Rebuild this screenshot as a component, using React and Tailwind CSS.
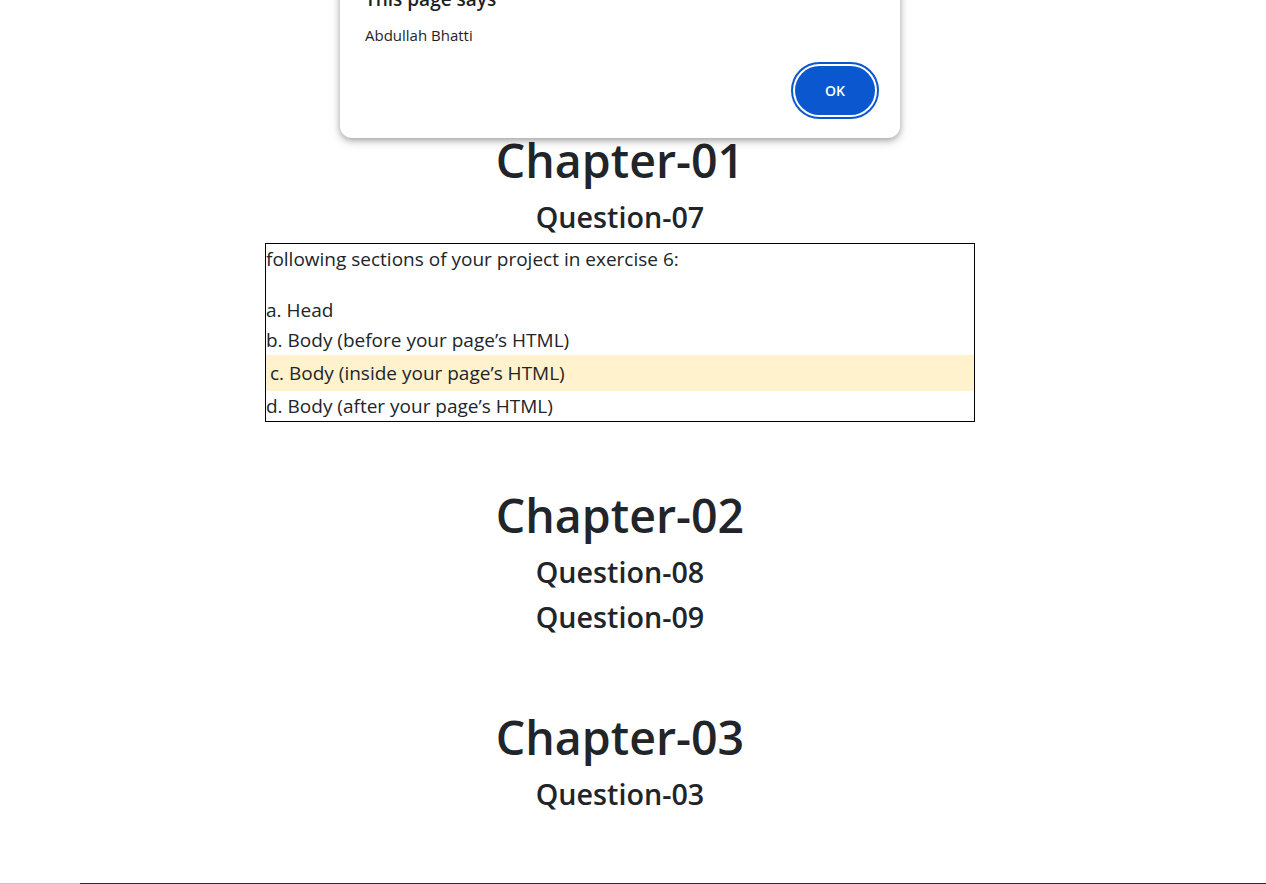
import React from "react";

const headFont = { fontFamily: '"Segoe UI", "Open Sans", "Noto Sans", sans-serif' };

function AlertDialog() {
  return (
    <div className="absolute left-[340px] top-[-34px] w-[560px] rounded-xl bg-white pl-[25px] pr-[21px] pt-[20px] pb-[19px] shadow-[0_2px_6px_rgba(0,0,0,0.3),0_4px_12px_rgba(0,0,0,0.12)]">
      <div className="text-[19px] font-semibold leading-[26px] text-[#1f1f1f]">This page says</div>
      <div className="mt-[13px] text-[15px] leading-[20px] text-[#1f1f1f]">Abdullah Bhatti</div>
      <div className="mt-[17px] flex justify-end">
        <button className="flex h-[57px] w-[88px] items-center justify-center rounded-full border-2 border-[#0b57d0] p-[2px]">
          <span className="flex h-full w-full items-center justify-center rounded-full bg-[#0b57d0] text-[14px] font-semibold text-white">
            OK
          </span>
        </button>
      </div>
    </div>
  );
}

function Chapter({ children, className = "" }) {
  return (
    <h1 className={`text-[46.5px] font-semibold leading-[58px] text-[#212529] ${className}`}>{children}</h1>
  );
}

function Question({ children, className = "" }) {
  return (
    <h3 className={`text-[28.7px] font-semibold leading-[34px] text-[#212529] ${className}`}>{children}</h3>
  );
}

export default function App() {
  return (
    <div className="relative flex h-[884px] flex-col overflow-hidden bg-white" style={headFont}>
      <AlertDialog />

      <div className="flex w-[1240px] flex-col items-center text-center">
        <Chapter className="mt-[131px]">Chapter-01</Chapter>
        <Question className="mt-[11px]">Question-07</Question>

        <div className="mt-[9px] w-[710px] border border-black text-left text-[19px] font-normal leading-[30px] text-[#212529]">
          <p className="mb-[21px]">following sections of your project in exercise 6:</p>
          <p>a. Head</p>
          <p>b. Body (before your page’s HTML)</p>
          <p className="bg-[#fff2cc] py-[3px] pl-[4px]">c. Body (inside your page’s HTML)</p>
          <p>d. Body (after your page’s HTML)</p>
        </div>

        <Chapter className="mt-[64px]">Chapter-02</Chapter>
        <Question className="mt-[11px]">Question-08</Question>
        <Question className="mt-[11px]">Question-09</Question>

        <Chapter className="mt-[74px]">Chapter-03</Chapter>
        <Question className="mt-[11px]">Question-03</Question>
      </div>

      <div className="mt-auto flex h-px">
        <div className="w-[80px] bg-[#c8c8c8]" />
        <div className="flex-1 bg-[#2b2b2b]" />
      </div>
    </div>
  );
}
